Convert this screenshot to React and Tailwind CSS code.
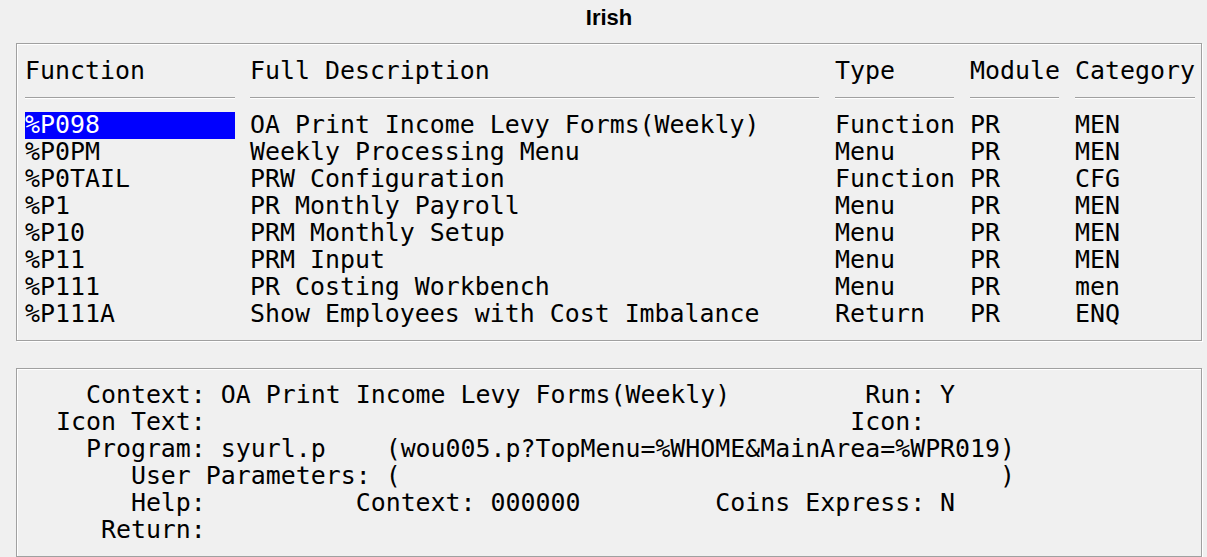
import React from "react";

// Function browser rows
const rows = [
  { fn: "%P098", desc: "OA Print Income Levy Forms(Weekly)", type: "Function", mod: "PR", cat: "MEN" },
  { fn: "%P0PM", desc: "Weekly Processing Menu", type: "Menu", mod: "PR", cat: "MEN" },
  { fn: "%P0TAIL", desc: "PRW Configuration", type: "Function", mod: "PR", cat: "CFG" },
  { fn: "%P1", desc: "PR Monthly Payroll", type: "Menu", mod: "PR", cat: "MEN" },
  { fn: "%P10", desc: "PRM Monthly Setup", type: "Menu", mod: "PR", cat: "MEN" },
  { fn: "%P11", desc: "PRM Input", type: "Menu", mod: "PR", cat: "MEN" },
  { fn: "%P111", desc: "PR Costing Workbench", type: "Menu", mod: "PR", cat: "men" },
  { fn: "%P111A", desc: "Show Employees with Cost Imbalance", type: "Return", mod: "PR", cat: "ENQ" },
];

const columns = [
  { key: "fn", label: "Function", width: "w-[210px]" },
  { key: "desc", label: "Full Description", width: "w-[569px]" },
  { key: "type", label: "Type", width: "w-[119px]" },
  { key: "mod", label: "Module", width: "w-[89px]" },
  { key: "cat", label: "Category", width: "w-[120px]" },
];

const gaps = ["mr-[15px]", "mr-[16px]", "mr-[16px]", "mr-[16px]", ""];

// detail panel, laid out on the character grid
const detailLines = [
  "    Context: OA Print Income Levy Forms(Weekly)         Run: Y",
  "  Icon Text:                                           Icon:",
  "    Program: syurl.p    (wou005.p?TopMenu=%WHOME&MainArea=%WPR019)",
  "       User Parameters: (                                        )",
  "       Help:          Context: 000000         Coins Express: N",
  "     Return:",
];

const mono = "font-['DejaVu_Sans_Mono',monospace] text-[24.9px]";
const etched = "border border-[#a0a0a0] shadow-[inset_1px_1px_0_#ffffff,1px_1px_0_#ffffff]";

export default function App() {
  return (
    <div className="w-[1207px] h-[557px] bg-[#f0f0f0] text-black overflow-hidden">
      <div className="ml-[16px] w-[1186px]">
        <div className="h-[43px] pt-[7px] text-center font-['Liberation_Sans',Arial,sans-serif] font-bold text-[22px] leading-[22px]">
          Irish
        </div>

        <div className={`${etched} h-[298px] pt-[15px] pl-[8px] pr-[6px] ${mono}`}>
          <div className="flex">
            {columns.map((c, i) => (
              <div key={c.key} className={`${c.width} ${gaps[i]} shrink-0`}>
                <div className="leading-[23px] whitespace-pre">{c.label}</div>
                <div className="mt-[15px] h-[2px] border-t border-[#a0a0a0] bg-white" />
              </div>
            ))}
          </div>

          <div className="mt-[13px]">
            {rows.map((r, ri) => (
              <div key={r.fn} className="flex">
                {columns.map((c, i) => (
                  <div
                    key={c.key}
                    className={`${c.width} ${gaps[i]} shrink-0 pt-[1px] pb-[3px] leading-[23px] whitespace-pre ${
                      ri === 0 && i === 0 ? "bg-[#0000ff] text-white" : ""
                    }`}
                  >
                    {r[c.key]}
                  </div>
                ))}
              </div>
            ))}
          </div>
        </div>

        <div className={`${etched} mt-[27px] h-[189px] pt-[12px] pl-[9px] ${mono}`}>
          {detailLines.map((line, i) => (
            <div key={i} className="leading-[27px] whitespace-pre">
              {line}
            </div>
          ))}
        </div>
      </div>
    </div>
  );
}
